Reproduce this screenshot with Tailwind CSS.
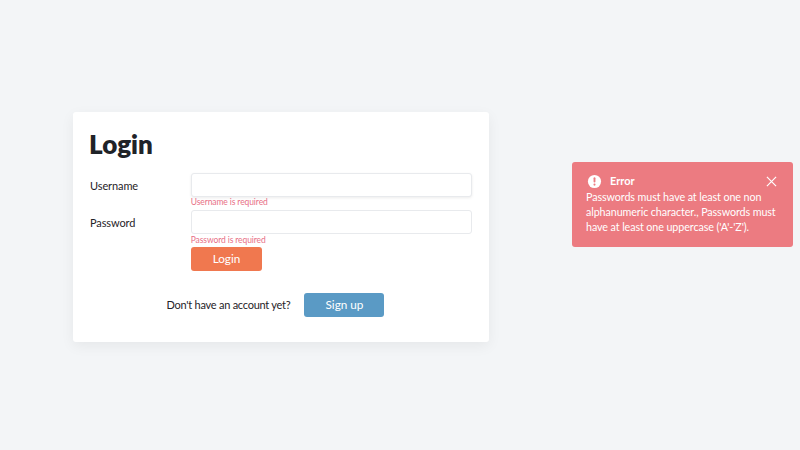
<!DOCTYPE html>
<html lang="en">
<head>
    <meta charset="UTF-8">
    <title>Login</title>
    <script src="https://cdn.jsdelivr.net/npm/@tailwindcss/browser@4"></script>
</head>
<body class="bg-[#f3f5f7] text-[#1f2328] font-['Lato',sans-serif]">
    <div class="relative h-[450px] w-[800px] overflow-hidden pt-[112px] pl-[73px]">
        <div class="w-[416px] h-[230px] bg-white rounded-[3px] shadow-[0_4px_14px_rgba(0,0,0,0.06)] px-[17px]">
            <h1 class="text-[26px] font-extrabold leading-[32px] pt-4 h-[61px] -ml-px">Login</h1>

            <div class="flex">
                <label class="w-[101px] text-[11px] tracking-[-0.1px] leading-[25px]">Username</label>
                <div class="w-[282px]">
                    <input type="text" aria-label="Username" class="block w-full h-[24px] bg-white border border-[#e8eaed] rounded-[3px] shadow-[0_1px_3px_rgba(0,0,0,0.08)]">
                    <p class="text-[8.5px] tracking-[-0.1px] leading-[11px] text-[#e86f86] h-[13px]">Username is required</p>
                </div>
            </div>

            <div class="flex">
                <label class="w-[101px] text-[11px] tracking-[-0.1px] leading-[26px]">Password</label>
                <div class="w-[282px]">
                    <input type="password" aria-label="Password" class="block w-full h-[24px] bg-white border border-[#e8eaed] rounded-[3px]">
                    <p class="text-[8.5px] tracking-[-0.1px] leading-[12px] text-[#e86f86] h-[13px]">Password is required</p>
                </div>
            </div>

            <div class="pl-[101px]">
                <button class="block w-[71px] h-[24px] bg-[#f0784f] text-white text-[11.75px] rounded-[3px]">Login</button>
            </div>

            <div class="flex items-center justify-center gap-[14px] mt-[22px] pr-[11px]">
                <span class="text-[11px] tracking-[-0.25px]">Don't have an account yet?</span>
                <button class="w-[80px] h-[24px] bg-[#5a9ac5] text-white text-[11.75px] rounded-[3px]">Sign up</button>
            </div>
        </div>

        <!-- toast -->
        <div class="absolute left-[572px] top-[162px] w-[221px] h-[85px] bg-[#ec7b81] rounded-[3px] text-white px-[14px] pt-[11px]">
            <div class="flex items-center h-[16px]">
                <svg viewBox="0 0 16 16" class="w-[15px] h-[15px] ml-[1px]">
                    <circle cx="8" cy="8" r="7" fill="#fff"/>
                    <rect x="7" y="3.5" width="2" height="5.5" rx="1" fill="#ec7b81"/>
                    <circle cx="8" cy="11.3" r="1.15" fill="#ec7b81"/>
                </svg>
                <span class="ml-[8px] text-[11px] font-bold">Error</span>
                <svg viewBox="0 0 12 12" class="w-[11px] h-[11px] ml-auto mr-[2px]" fill="none" stroke="#fff" stroke-width="1.3">
                    <path d="M1 1l10 10M11 1L1 11"/>
                </svg>
            </div>
            <p class="text-[10.75px] tracking-[-0.1px] leading-[15px] w-[200px]">Passwords must have at least one non alphanumeric character., Passwords must have at least one uppercase ('A'-'Z').</p>
        </div>
    </div>
</body>
</html>
